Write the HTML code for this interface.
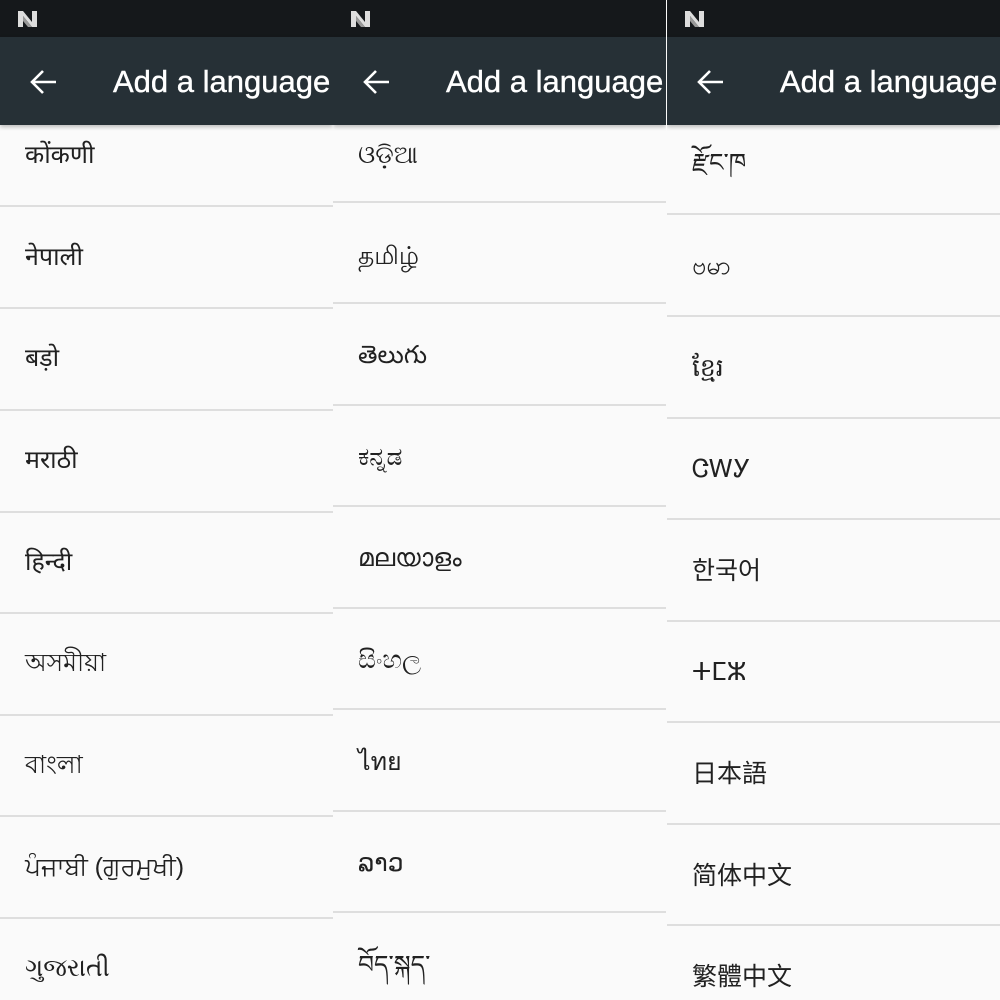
<!DOCTYPE html>
<html><head><meta charset="utf-8"><style>
*{margin:0;padding:0;box-sizing:border-box}
body{width:1000px;height:1000px;overflow:hidden;background:#fafafa;position:relative;font-family:"Liberation Sans","Noto Sans CJK SC",sans-serif}
.col{position:absolute;top:0;width:333px;height:1000px;overflow:hidden;background:#fafafa}
.sb{position:absolute;left:0;top:0;width:100%;height:37px;background:#15181b}
.tb{position:absolute;left:0;top:37px;width:100%;height:88px;background:#263036;box-shadow:0 2px 4px rgba(0,0,0,.25)}
.n{position:absolute;left:17px;top:10px;width:22px;height:18px}
.ar{position:absolute;left:30px;top:69px;width:28px;height:26px}
.tt{position:absolute;left:113px;top:63px;color:#fff;font-size:31px;white-space:nowrap;line-height:38px;-webkit-text-stroke:0.4px #fff}
.d{position:absolute;left:0;width:100%;height:2px;background:#dedede}
.t{position:absolute;left:25px;font-size:25px;line-height:30px;color:#212121;white-space:nowrap}
</style></head><body>
<div class="col" style="left:0" id="c1"></div>
<div class="col" style="left:333px" id="c2"></div>
<div class="col" style="left:667px" id="c3"></div>
<script>
const cols=[
 {id:'c1',d:[206,308,410,512,613,715,816,918],y:[155,257,358,460,562,663,765,867,968],t:['कोंकणी','नेपाली','बड़ो','मराठी','हिन्दी','অসমীয়া','বাংলা','ਪੰਜਾਬੀ (ਗੁਰਮੁਖੀ)','ગુજરાતી']},
 {id:'c2',d:[202,303,405,506,608,709,811,912],y:[155,256,355,457,558,660,762,863,965],t:['ଓଡ଼ିଆ','தமிழ்','తెలుగు','ಕನ್ನಡ','മലയാളം','සිංහල','ไทย','ລາວ','བོད་སྐད་']},
 {id:'c3',d:[214,316,418,519,621,722,824,925],y:[163,266,368,469,571,672,774,876,977],t:['རྫོང་ཁ','ဗမာ','ខ្មែរ','ᏣᎳᎩ','한국어','ⵜⵎⵣ','日本語','简体中文','繁體中文']}
];
for(const c of cols){
 const e=document.getElementById(c.id);let h='';
 c.t.forEach((s,i)=>{h+=`<div class="t" style="top:${c.y[i]-15}px">${s}</div>`});
 c.d.forEach(y=>{h+=`<div class="d" style="top:${y-1}px"></div>`});
 h+=`<div class="sb"><svg class="n" viewBox="0 0 22 18"><path d="M1 1h5l9 11V1h5v16h-5L6 6v11H1z" fill="#ddd"/><path d="M6 6l9 11h-4L6 11z" fill="#999"/></svg></div>`;
 h+=`<div class="tb"></div><svg class="ar" viewBox="0 0 28 26"><path d="M26 13H3M13 2L2 13l11 11" stroke="#fff" stroke-width="2.6" fill="none"/></svg><div class="tt">Add a language</div>`;
 e.innerHTML=h;
}
</script>
</body></html>
